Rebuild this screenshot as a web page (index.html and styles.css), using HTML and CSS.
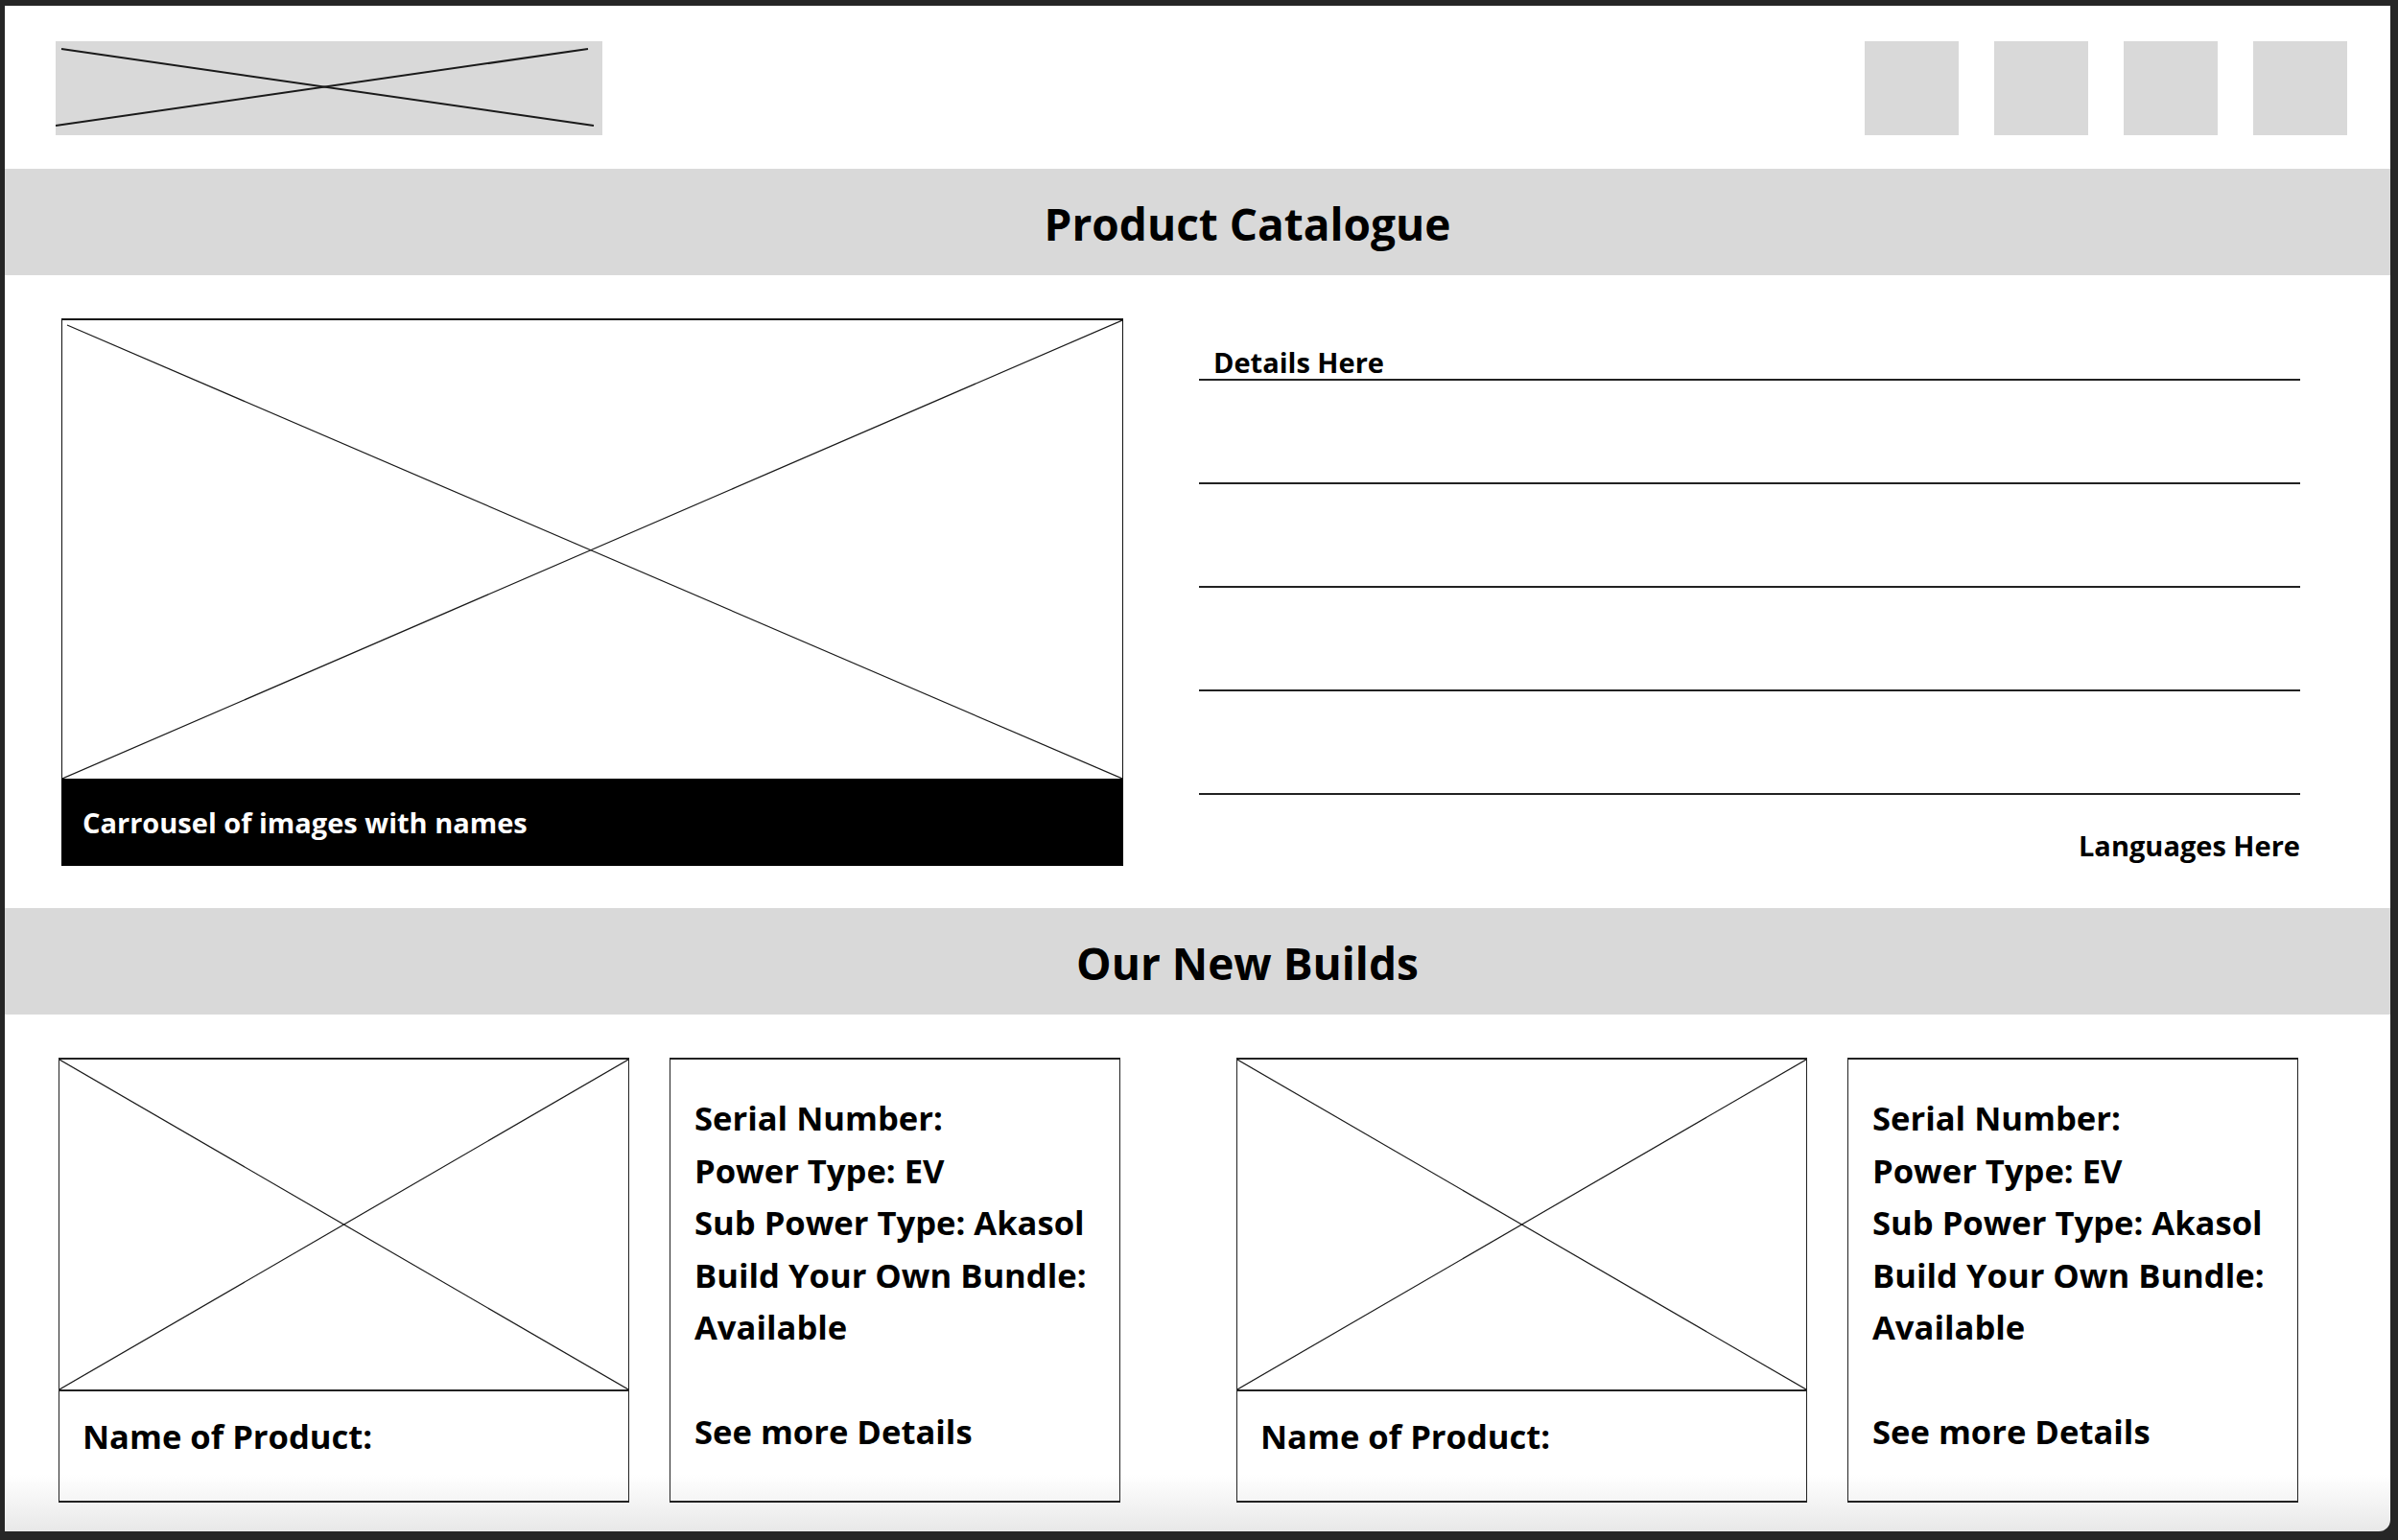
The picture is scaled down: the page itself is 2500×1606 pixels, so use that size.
FILE: index.html
```html
<!DOCTYPE html>
<html>
<head>
  <title>Product Catalogue</title>
  <link rel="stylesheet" href="styles.css">
</head>
<body>
  <div class="page">

    <!-- top bar: logo + nav buttons -->
    <div class="header">
      <div class="logo">
        <svg viewBox="0 0 570 98" preserveAspectRatio="none">
          <line x1="6" y1="8" x2="561" y2="88"></line>
          <line x1="555" y1="8" x2="0" y2="88"></line>
        </svg>
      </div>
      <div class="nav">
        <div class="nav-item"></div>
        <div class="nav-item"></div>
        <div class="nav-item"></div>
        <div class="nav-item"></div>
      </div>
    </div>

    <div class="band"><h1>Product Catalogue</h1></div>

    <div class="catalogue">
      <div class="carousel">
        <div class="carousel-image">
          <svg viewBox="0 0 1105 478" preserveAspectRatio="none">
            <line x1="5" y1="5" x2="1105" y2="478"></line>
            <line x1="0" y1="478" x2="1105" y2="0"></line>
          </svg>
        </div>
        <div class="carousel-caption">Carrousel of images with names</div>
      </div>

      <div class="details">
        <div class="detail-row first"><span>Details Here</span></div>
        <div class="detail-row"></div>
        <div class="detail-row"></div>
        <div class="detail-row"></div>
        <div class="detail-row"></div>
        <p class="languages">Languages Here</p>
      </div>
    </div>

    <div class="band"><h1>Our New Builds</h1></div>

    <div class="builds">
      <div class="build">
        <div class="product-card">
          <div class="product-image">
            <svg viewBox="0 0 100 100" preserveAspectRatio="none">
              <line x1="0" y1="0" x2="100" y2="100"></line>
              <line x1="0" y1="100" x2="100" y2="0"></line>
            </svg>
          </div>
          <div class="product-name">Name of Product:</div>
        </div>
        <div class="spec-card">
          <p>Serial Number:</p>
          <p>Power Type: EV</p>
          <p>Sub Power Type: Akasol</p>
          <p>Build Your Own Bundle: Available</p>
          <p class="more">See more Details</p>
        </div>
      </div>

      <div class="build">
        <div class="product-card">
          <div class="product-image">
            <svg viewBox="0 0 100 100" preserveAspectRatio="none">
              <line x1="0" y1="0" x2="100" y2="100"></line>
              <line x1="0" y1="100" x2="100" y2="0"></line>
            </svg>
          </div>
          <div class="product-name">Name of Product:</div>
        </div>
        <div class="spec-card">
          <p>Serial Number:</p>
          <p>Power Type: EV</p>
          <p>Sub Power Type: Akasol</p>
          <p>Build Your Own Bundle: Available</p>
          <p class="more">See more Details</p>
        </div>
      </div>
    </div>

  </div>
</body>
</html>
```

FILE: styles.css
```css
html, body {
  margin: 0;
  height: 1606px;
  overflow: hidden;
}

body {
  background-color: #262626;
  padding: 6px 8px 0 5px;
  box-sizing: border-box;
  font-family: "Open Sans", "Liberation Sans", sans-serif;
  color: #000;
}

.page {
  height: 1591px;
  background: linear-gradient(#fff 1532px, #e8e8e8);
  border-bottom-right-radius: 12px;
  overflow: hidden;
}

/* header */
.header {
  display: flex;
  justify-content: space-between;
  align-items: flex-start;
  padding: 37px 45px 35px 53px;
}

.logo {
  width: 570px;
  height: 98px;
  background-color: #d9d9d9;
}

.logo svg,
.carousel-image svg,
.product-image svg {
  display: block;
  width: 100%;
  height: 100%;
}

.logo line {
  stroke: #1a1a1a;
  stroke-width: 2;
  vector-effect: non-scaling-stroke;
}

.nav {
  display: flex;
  gap: 37px;
}

.nav-item {
  width: 98px;
  height: 98px;
  background-color: #d9d9d9;
}

/* grey title bands */
.band {
  height: 111px;
  box-sizing: border-box;
  background-color: #d9d9d9;
  display: flex;
  align-items: center;
  justify-content: center;
  padding: 3px 0 0 104px;
}

.band h1 {
  margin: 0;
  font-size: 46px;
  font-weight: 700;
}

/* catalogue section */
.catalogue {
  display: flex;
  align-items: flex-start;
  gap: 79px;
  padding: 45px 0 44px 59px;
}

.carousel {
  width: 1105px;
  border: 1px solid #111;
  border-top-width: 2px;
  border-bottom: none;
}

.carousel-image {
  height: 478px;
}

.carousel-image line,
.product-image line {
  stroke: #1a1a1a;
  stroke-width: 1.2;
  vector-effect: non-scaling-stroke;
}

.carousel-caption {
  height: 91px;
  background-color: #000;
  color: #fff;
  font-size: 29px;
  font-weight: 700;
  display: flex;
  align-items: center;
  padding-left: 22px;
  margin: 0 -1px;
}

.details {
  width: 1148px;
}

.detail-row {
  height: 108px;
  border-bottom: 2px solid #222;
  box-sizing: border-box;
}

.detail-row.first {
  height: 65px;
  display: flex;
  align-items: flex-end;
  padding: 0 0 3px 15px;
}

.detail-row span {
  font-size: 29px;
  font-weight: 700;
  line-height: 1;
}

.languages {
  margin: 33px 0 0;
  text-align: right;
  font-size: 29px;
  font-weight: 700;
}

/* new builds */
.builds {
  display: flex;
  gap: 121px;
  padding: 45px 0 0 56px;
}

.build {
  display: flex;
  gap: 42px;
}

.product-card {
  width: 595px;
  height: 464px;
  box-sizing: border-box;
  border: 1px solid #222;
  border-top-width: 2px;
  border-bottom-width: 2px;
}

.product-image {
  height: 344px;
  border-bottom: 2px solid #222;
}

.product-name {
  padding: 20px 24px 0;
  font-size: 34.6px;
  font-weight: 700;
  line-height: 54.5px;
}

.spec-card {
  width: 470px;
  height: 464px;
  box-sizing: border-box;
  border: 1px solid #222;
  border-top-width: 2px;
  border-bottom-width: 2px;
  padding: 34px 16px 0 25px;
}

.spec-card p {
  margin: 0;
  font-size: 34.6px;
  font-weight: 700;
  line-height: 54.5px;
}

.spec-card .more {
  margin-top: 54.5px;
}
```
